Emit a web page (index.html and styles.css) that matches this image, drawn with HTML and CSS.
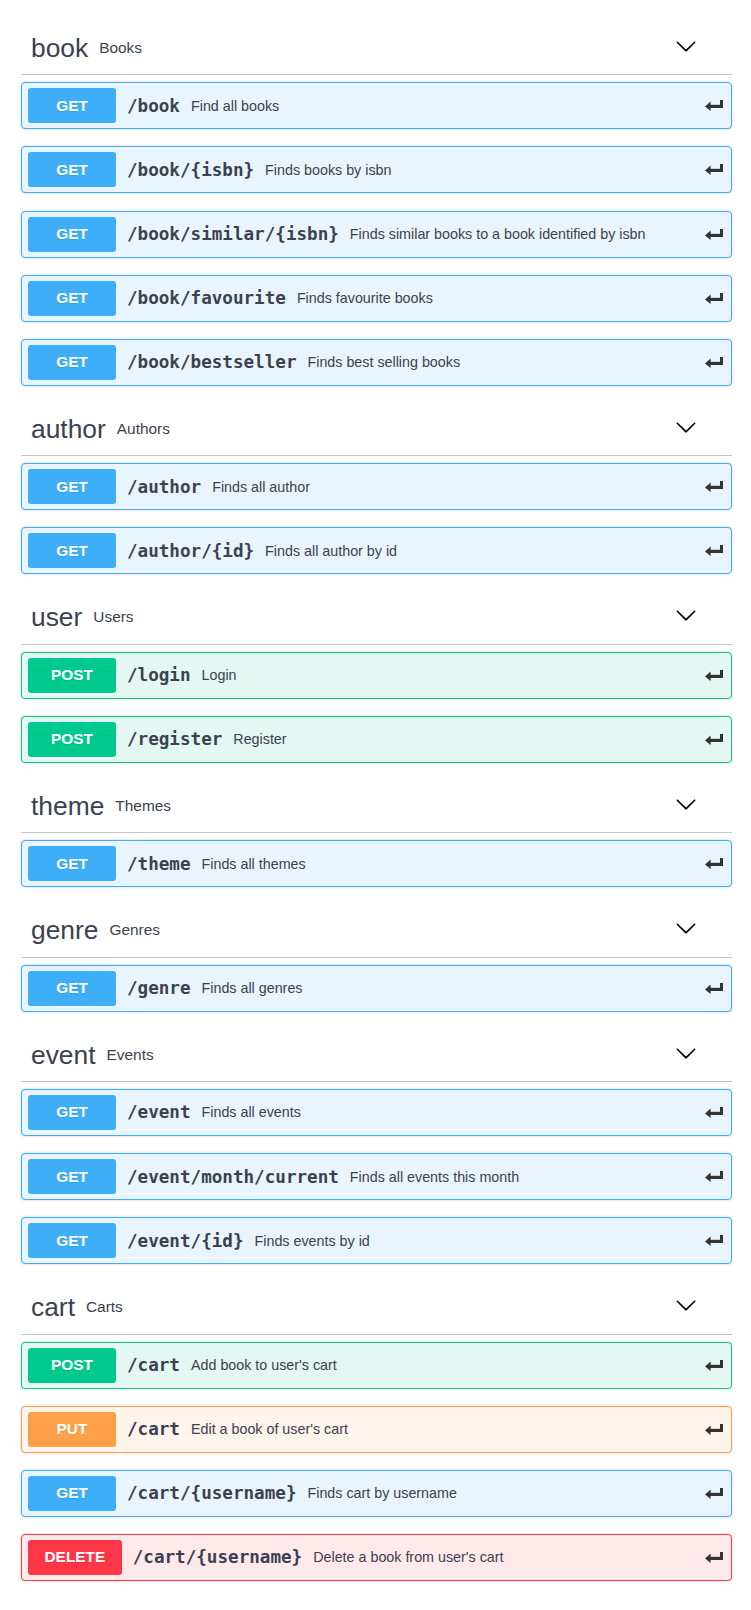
FILE: index.html
```html
<!DOCTYPE html>
<html lang="en">
<head>
<meta charset="utf-8">
<title>API</title>
<link rel="stylesheet" href="styles.css">
</head>
<body>
<div class="wrapper">

  <section class="tag-section">
    <h3 class="tag-header"><span class="tag-name">book</span><small class="tag-desc">Books</small><span class="chev"><svg viewBox="0 0 20 20" width="22" height="22"><path d="M17.418 6.109c.272-.268.709-.268.979 0s.271.701 0 .969l-7.908 7.83c-.27.268-.707.268-.979 0l-7.908-7.83c-.27-.268-.27-.701 0-.969.271-.268.709-.268.979 0L10 13.25l7.418-7.141z"/></svg></span></h3>
    <div class="op op-get"><span class="method">GET</span><span class="path">/book</span><span class="desc">Find all books</span><span class="ret"><svg viewBox="0 0 18 11" width="18" height="11"><rect x="15" y="0" width="3" height="8"/><rect x="4" y="4.8" width="14" height="3.2"/><polygon points="0,6.4 5.6,1.6 5.6,11"/></svg></span></div>
    <div class="op op-get"><span class="method">GET</span><span class="path">/book/{isbn}</span><span class="desc">Finds books by isbn</span><span class="ret"><svg viewBox="0 0 18 11" width="18" height="11"><rect x="15" y="0" width="3" height="8"/><rect x="4" y="4.8" width="14" height="3.2"/><polygon points="0,6.4 5.6,1.6 5.6,11"/></svg></span></div>
    <div class="op op-get"><span class="method">GET</span><span class="path">/book/similar/{isbn}</span><span class="desc">Finds similar books to a book identified by isbn</span><span class="ret"><svg viewBox="0 0 18 11" width="18" height="11"><rect x="15" y="0" width="3" height="8"/><rect x="4" y="4.8" width="14" height="3.2"/><polygon points="0,6.4 5.6,1.6 5.6,11"/></svg></span></div>
    <div class="op op-get"><span class="method">GET</span><span class="path">/book/favourite</span><span class="desc">Finds favourite books</span><span class="ret"><svg viewBox="0 0 18 11" width="18" height="11"><rect x="15" y="0" width="3" height="8"/><rect x="4" y="4.8" width="14" height="3.2"/><polygon points="0,6.4 5.6,1.6 5.6,11"/></svg></span></div>
    <div class="op op-get"><span class="method">GET</span><span class="path">/book/bestseller</span><span class="desc">Finds best selling books</span><span class="ret"><svg viewBox="0 0 18 11" width="18" height="11"><rect x="15" y="0" width="3" height="8"/><rect x="4" y="4.8" width="14" height="3.2"/><polygon points="0,6.4 5.6,1.6 5.6,11"/></svg></span></div>
  </section>

  <section class="tag-section">
    <h3 class="tag-header"><span class="tag-name">author</span><small class="tag-desc">Authors</small><span class="chev"><svg viewBox="0 0 20 20" width="22" height="22"><path d="M17.418 6.109c.272-.268.709-.268.979 0s.271.701 0 .969l-7.908 7.83c-.27.268-.707.268-.979 0l-7.908-7.830c-.27-.268-.27-.701 0-.969.271-.268.709-.268.979 0L10 13.25l7.418-7.141z"/></svg></span></h3>
    <div class="op op-get"><span class="method">GET</span><span class="path">/author</span><span class="desc">Finds all author</span><span class="ret"><svg viewBox="0 0 18 11" width="18" height="11"><rect x="15" y="0" width="3" height="8"/><rect x="4" y="4.8" width="14" height="3.2"/><polygon points="0,6.4 5.6,1.6 5.6,11"/></svg></span></div>
    <div class="op op-get"><span class="method">GET</span><span class="path">/author/{id}</span><span class="desc">Finds all author by id</span><span class="ret"><svg viewBox="0 0 18 11" width="18" height="11"><rect x="15" y="0" width="3" height="8"/><rect x="4" y="4.8" width="14" height="3.2"/><polygon points="0,6.4 5.6,1.6 5.6,11"/></svg></span></div>
  </section>

  <section class="tag-section">
    <h3 class="tag-header"><span class="tag-name">user</span><small class="tag-desc">Users</small><span class="chev"><svg viewBox="0 0 20 20" width="22" height="22"><path d="M17.418 6.109c.272-.268.709-.268.979 0s.271.701 0 .969l-7.908 7.83c-.27.268-.707.268-.979 0l-7.908-7.83c-.27-.268-.27-.701 0-.969.271-.268.709-.268.979 0L10 13.25l7.418-7.141z"/></svg></span></h3>
    <div class="op op-post"><span class="method">POST</span><span class="path">/login</span><span class="desc">Login</span><span class="ret"><svg viewBox="0 0 18 11" width="18" height="11"><rect x="15" y="0" width="3" height="8"/><rect x="4" y="4.8" width="14" height="3.2"/><polygon points="0,6.4 5.6,1.6 5.6,11"/></svg></span></div>
    <div class="op op-post"><span class="method">POST</span><span class="path">/register</span><span class="desc">Register</span><span class="ret"><svg viewBox="0 0 18 11" width="18" height="11"><rect x="15" y="0" width="3" height="8"/><rect x="4" y="4.8" width="14" height="3.2"/><polygon points="0,6.4 5.6,1.6 5.6,11"/></svg></span></div>
  </section>

  <section class="tag-section">
    <h3 class="tag-header"><span class="tag-name">theme</span><small class="tag-desc">Themes</small><span class="chev"><svg viewBox="0 0 20 20" width="22" height="22"><path d="M17.418 6.109c.272-.268.709-.268.979 0s.271.701 0 .969l-7.908 7.83c-.27.268-.707.268-.979 0l-7.908-7.83c-.27-.268-.27-.701 0-.969.271-.268.709-.268.979 0L10 13.25l7.418-7.141z"/></svg></span></h3>
    <div class="op op-get"><span class="method">GET</span><span class="path">/theme</span><span class="desc">Finds all themes</span><span class="ret"><svg viewBox="0 0 18 11" width="18" height="11"><rect x="15" y="0" width="3" height="8"/><rect x="4" y="4.8" width="14" height="3.2"/><polygon points="0,6.4 5.6,1.6 5.6,11"/></svg></span></div>
  </section>

  <section class="tag-section">
    <h3 class="tag-header"><span class="tag-name">genre</span><small class="tag-desc">Genres</small><span class="chev"><svg viewBox="0 0 20 20" width="22" height="22"><path d="M17.418 6.109c.272-.268.709-.268.979 0s.271.701 0 .969l-7.908 7.83c-.27.268-.707.268-.979 0l-7.908-7.83c-.27-.268-.27-.701 0-.969.271-.268.709-.268.979 0L10 13.25l7.418-7.141z"/></svg></span></h3>
    <div class="op op-get"><span class="method">GET</span><span class="path">/genre</span><span class="desc">Finds all genres</span><span class="ret"><svg viewBox="0 0 18 11" width="18" height="11"><rect x="15" y="0" width="3" height="8"/><rect x="4" y="4.8" width="14" height="3.2"/><polygon points="0,6.4 5.6,1.6 5.6,11"/></svg></span></div>
  </section>

  <section class="tag-section">
    <h3 class="tag-header"><span class="tag-name">event</span><small class="tag-desc">Events</small><span class="chev"><svg viewBox="0 0 20 20" width="22" height="22"><path d="M17.418 6.109c.272-.268.709-.268.979 0s.271.701 0 .969l-7.908 7.83c-.27.268-.707.268-.979 0l-7.908-7.83c-.27-.268-.27-.701 0-.969.271-.268.709-.268.979 0L10 13.25l7.418-7.141z"/></svg></span></h3>
    <div class="op op-get"><span class="method">GET</span><span class="path">/event</span><span class="desc">Finds all events</span><span class="ret"><svg viewBox="0 0 18 11" width="18" height="11"><rect x="15" y="0" width="3" height="8"/><rect x="4" y="4.8" width="14" height="3.2"/><polygon points="0,6.4 5.6,1.6 5.6,11"/></svg></span></div>
    <div class="op op-get"><span class="method">GET</span><span class="path">/event/month/current</span><span class="desc">Finds all events this month</span><span class="ret"><svg viewBox="0 0 18 11" width="18" height="11"><rect x="15" y="0" width="3" height="8"/><rect x="4" y="4.8" width="14" height="3.2"/><polygon points="0,6.4 5.6,1.6 5.6,11"/></svg></span></div>
    <div class="op op-get"><span class="method">GET</span><span class="path">/event/{id}</span><span class="desc">Finds events by id</span><span class="ret"><svg viewBox="0 0 18 11" width="18" height="11"><rect x="15" y="0" width="3" height="8"/><rect x="4" y="4.8" width="14" height="3.2"/><polygon points="0,6.4 5.6,1.6 5.6,11"/></svg></span></div>
  </section>

  <section class="tag-section">
    <h3 class="tag-header"><span class="tag-name">cart</span><small class="tag-desc">Carts</small><span class="chev"><svg viewBox="0 0 20 20" width="22" height="22"><path d="M17.418 6.109c.272-.268.709-.268.979 0s.271.701 0 .969l-7.908 7.83c-.27.268-.707.268-.979 0l-7.908-7.83c-.27-.268-.27-.701 0-.969.271-.268.709-.268.979 0L10 13.25l7.418-7.141z"/></svg></span></h3>
    <div class="op op-post"><span class="method">POST</span><span class="path">/cart</span><span class="desc">Add book to user's cart</span><span class="ret"><svg viewBox="0 0 18 11" width="18" height="11"><rect x="15" y="0" width="3" height="8"/><rect x="4" y="4.8" width="14" height="3.2"/><polygon points="0,6.4 5.6,1.6 5.6,11"/></svg></span></div>
    <div class="op op-put"><span class="method">PUT</span><span class="path">/cart</span><span class="desc">Edit a book of user's cart</span><span class="ret"><svg viewBox="0 0 18 11" width="18" height="11"><rect x="15" y="0" width="3" height="8"/><rect x="4" y="4.8" width="14" height="3.2"/><polygon points="0,6.4 5.6,1.6 5.6,11"/></svg></span></div>
    <div class="op op-get"><span class="method">GET</span><span class="path">/cart/{username}</span><span class="desc">Finds cart by username</span><span class="ret"><svg viewBox="0 0 18 11" width="18" height="11"><rect x="15" y="0" width="3" height="8"/><rect x="4" y="4.8" width="14" height="3.2"/><polygon points="0,6.4 5.6,1.6 5.6,11"/></svg></span></div>
    <div class="op op-delete"><span class="method">DELETE</span><span class="path">/cart/{username}</span><span class="desc">Delete a book from user's cart</span><span class="ret"><svg viewBox="0 0 18 11" width="18" height="11"><rect x="15" y="0" width="3" height="8"/><rect x="4" y="4.8" width="14" height="3.2"/><polygon points="0,6.4 5.6,1.6 5.6,11"/></svg></span></div>
  </section>

</div>
</body>
</html>
```

FILE: styles.css
```css
* { box-sizing: border-box; }

html, body {
  margin: 0;
  padding: 0;
  background: #ffffff;
}

body {
  font-family: "Liberation Sans", Arial, sans-serif;
  color: #3b4151;
}

.wrapper {
  padding: 22px 19px 0 21px;
}

.tag-header {
  display: flex;
  align-items: center;
  margin: 0 0 7px;
  padding: 11px 35px 11px 10px;
  border-bottom: 1px solid #c4c6cb;
  font-size: 26.4px;
  font-weight: normal;
  line-height: 30.4px;
  color: #3b4151;
}

.tag-name {
  flex: none;
}

.tag-desc {
  flex: 1;
  padding: 0 11px;
  font-size: 15.4px;
  line-height: 20px;
  color: #3b4151;
}

.chev {
  display: flex;
  margin-bottom: 4px;
}

.chev svg {
  fill: #000000;
}

.op {
  display: flex;
  align-items: center;
  height: 47px;
  margin: 0 0 17.05px;
  padding: 5px 6px;
  border: 1px solid;
  border-radius: 4px;
  box-shadow: 0 0 3px rgba(0, 0, 0, 0.19);
}

.method {
  flex: none;
  display: flex;
  align-items: center;
  justify-content: center;
  min-width: 88px;
  height: 35px;
  padding: 0 16.5px;
  border-radius: 3px;
  font-size: 15.4px;
  font-weight: bold;
  color: #ffffff;
  text-shadow: 0 1px 0 rgba(0, 0, 0, 0.1);
}

.path {
  flex: none;
  padding: 0 11px;
  font-family: "DejaVu Sans Mono", monospace;
  font-size: 17.6px;
  font-weight: bold;
  color: #3b4151;
}

.desc {
  flex: 1;
  font-size: 14.3px;
  color: #3b4151;
}

.ret {
  flex: none;
  display: flex;
  margin-right: 2px;
}

.ret svg {
  fill: #333333;
}

.op-get {
  background: #e8f5fe;
  border-color: #3daef7;
}
.op-get .method { background: #3daef7; }

.op-post {
  background: #e3f8f2;
  border-color: #14c28c;
}
.op-post .method { background: #00c98d; }

.op-put {
  background: #fff4ec;
  border-color: #ffa24f;
}
.op-put .method { background: #ff9f48; }

.op-delete {
  background: #ffe9ea;
  border-color: #ff3b4a;
}
.op-delete .method { background: #ff3647; }
```
